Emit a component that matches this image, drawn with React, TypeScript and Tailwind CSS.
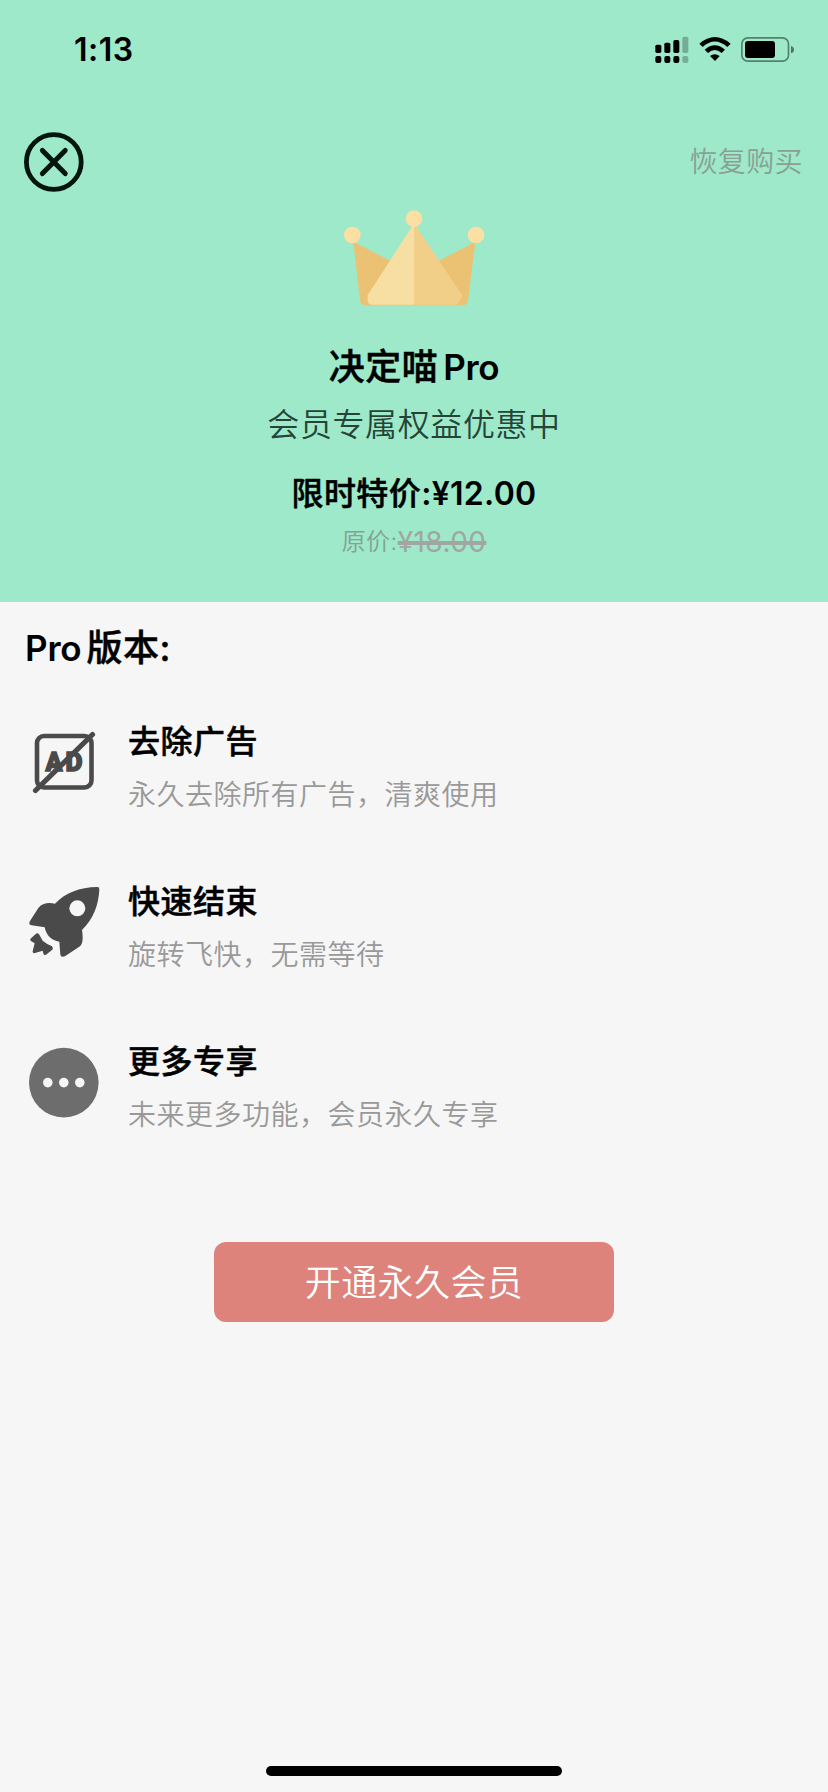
import React from 'react';

interface Feature {
    title: string;
    desc: string;
    icon: React.ReactNode;
}

const SignalIcon = () => (
    <svg className="w-[34px] h-[28px]" viewBox="80 108 102 84">
        <rect x="81" y="134" width="18" height="25" rx="5" />
        <rect x="108" y="128" width="18" height="31" rx="5" />
        <rect x="135" y="120" width="18" height="39" rx="5" />
        <rect x="162" y="110" width="18" height="49" rx="5" opacity="0.25" />
        <rect x="81" y="168" width="18" height="21" rx="6" />
        <rect x="108" y="168" width="18" height="21" rx="6" />
        <rect x="135" y="168" width="18" height="21" rx="6" />
        <rect x="162" y="168" width="18" height="21" rx="6" opacity="0.25" />
    </svg>
);

const WifiIcon = () => (
    <svg className="w-[32px] h-[28px]" viewBox="215 108 96 84">
        <path d="M216 131 Q262 91 310 131 L300 141 Q262 108 226 141 Z" />
        <path d="M232 149 Q262 123 293 149 L283 159 Q262 141 242 159 Z" />
        <path d="M248 168 Q262 157 277 168 L263 183 Z" />
    </svg>
);

const BatteryIcon = () => (
    <svg className="w-[53px] h-[28px]" viewBox="339 108 159 84">
        <rect x="341.5" y="113.5" width="140" height="70" rx="18" fill="none" stroke="#000" strokeWidth="5" opacity="0.45" />
        <rect x="351" y="123" width="90" height="51" rx="9" />
        <path d="M489 138 Q498 141 498 149 Q498 157 489 160 Z" opacity="0.5" />
    </svg>
);

const CloseIcon = () => (
    <svg className="w-[60px] h-[60px]" viewBox="0 0 60 60" fill="none" stroke="#04150d" strokeLinecap="round">
        <circle cx="29.8" cy="30" r="27.4" strokeWidth="4.8" />
        <path d="M18.4 18.4 L41.2 41.6 M41.2 18.4 L18.4 41.6" strokeWidth="5" />
    </svg>
);

const CrownIcon = () => (
    <svg className="w-[140px] h-[98px]" viewBox="72 54 420 294">
        <path d="M100 155 L206 210 L282 250 L360 211 L466 155 L444 330 Q442 346 428 346 H136 Q122 346 120 330 Z" fill="#ebc173" />
        <path d="M282 100 V344 H156 Q143 344 143 330 V316 Z" fill="#f7dfa3" />
        <path d="M282 100 L427 316 Q422 332 411 344 H282 Z" fill="#f2cf89" />
        <circle cx="97" cy="135" r="25" fill="#fbdfa3" />
        <circle cx="282" cy="86" r="25" fill="#fbdfa3" />
        <circle cx="468" cy="135" r="25" fill="#fbdfa3" />
    </svg>
);

const NoAdIcon = () => (
    <svg className="w-[72px] h-[72px]" viewBox="0 0 72 72" fill="#4a4a4a" stroke="#4a4a4a">
        <rect x="9" y="10" width="54.5" height="51.5" rx="7" fill="none" strokeWidth="4.6" />
        <g strokeWidth="1.4" className="font-['Roboto'] text-[26px] font-black">
            <text x="17.5" y="44.5" textLength="17" lengthAdjust="spacingAndGlyphs">A</text>
            <text x="37.5" y="44.5" textLength="17" lengthAdjust="spacingAndGlyphs">D</text>
        </g>
        <path d="M7.5 64.5 L64.5 8.5" strokeWidth="5.2" strokeLinecap="round" />
    </svg>
);

const RocketIcon = () => (
    <svg className="w-[72px] h-[72px]" viewBox="84 78 216 216" fill="#4a4a4a">
        <path d="M292 81 Q298 81 298 88 C296 135 280 178 246 210 C249 230 250 250 240 259 L196 288 Q183 294 181 284 L178 245 C155 242 138 225 134 202 L95 196 Q84 194 90 183 L115 144 C125 130 145 126 165 131 C195 99 238 82 292 81 Z" />
        <path d="M108 221 Q113 217 118 224 L128 242 Q140 252 156 259 Q161 264 157 269 L138 284 Q131 288 130 280 L128 272 L105 279 Q97 281 98 274 L104 250 L94 244 Q88 240 93 235 Z" />
        <circle cx="232" cy="145" r="24" fill="#f6f6f6" />
    </svg>
);

const MoreIcon = () => (
    <svg className="w-[72px] h-[72px]" viewBox="0 0 72 72">
        <circle cx="35.8" cy="36.6" r="34.8" fill="#6d6d6d" />
        <circle cx="19.8" cy="36.6" r="4.8" fill="#f6f6f6" />
        <circle cx="35.8" cy="36.6" r="4.8" fill="#f6f6f6" />
        <circle cx="51.8" cy="36.6" r="4.8" fill="#f6f6f6" />
    </svg>
);

const features: Feature[] = [
    { title: '去除广告', desc: '永久去除所有广告，清爽使用', icon: <NoAdIcon /> },
    { title: '快速结束', desc: '旋转飞快，无需等待', icon: <RocketIcon /> },
    { title: '更多专享', desc: '未来更多功能，会员永久专享', icon: <MoreIcon /> },
];

const StatusBar = () => (
    <div className="flex h-[100px] items-center justify-between pl-[74px] pr-[34px]">
        <span className="text-[32px] leading-10 font-semibold tracking-[0.5px]">1:13</span>
        <div className="flex items-center gap-[10px]">
            <SignalIcon />
            <WifiIcon />
            <BatteryIcon />
        </div>
    </div>
);

const App: React.FC = () => {
    return (
        <div className="flex h-[1792px] w-[828px] flex-col bg-[#f6f6f6] font-['Inter','Noto_Sans_CJK_SC',sans-serif] whitespace-nowrap text-black">
            <header className="h-[602px] bg-[#9de9c9]">
                <StatusBar />
                <div className="mt-8 flex items-center justify-between pl-6 pr-[25px]">
                    <button><CloseIcon /></button>
                    <button className="text-[28px] leading-9 font-[350] tracking-[0.4px] text-[#89a094]">恢复购买</button>
                </div>
                <div className="mt-4 flex flex-col items-center">
                    <CrownIcon />
                    <h1 className="mt-[37px] flex text-[36px] leading-[48px] font-medium tracking-[0.5px]">
                        <span className="[-webkit-text-stroke:0.5px_black]">决定喵</span>
                        <span className="ml-[5px] text-[35px] font-semibold tracking-[-0.3px]">Pro</span>
                    </h1>
                    <p className="mt-[14px] text-[32px] leading-10 font-[350] tracking-[0.6px] text-[#254437]">会员专属权益优惠中</p>
                    <p className="mt-[29px] flex text-[32px] leading-10 font-medium tracking-[0.4px]">
                        <span className="[-webkit-text-stroke:0.5px_black]">限时特价</span>
                        <span className="font-semibold tracking-[0.3px]">:¥12.00</span>
                    </p>
                    <p className="mt-3 flex text-[24px] leading-8 font-[350] tracking-[0.4px] text-[#84a292]">
                        原价:
                        <span className="text-[28px] font-normal text-[#a0a6a2] line-through decoration-[4px]">¥18.00</span>
                    </p>
                </div>
            </header>
            <main className="flex flex-1 flex-col pt-[22px]">
                <h2 className="flex pl-[25px] text-[36px] leading-[48px] font-medium tracking-[0.5px]">
                    <span className="text-[35px] font-semibold tracking-[-0.2px]">Pro</span>
                    <span className="ml-[5px] [-webkit-text-stroke:0.5px_black]">版本:</span>
                </h2>
                <ul className="mt-[10px]">
                    {features.map((item) => (
                        <li key={item.title} className="flex h-40 items-start pl-7">
                            <div className="mt-11">{item.icon}</div>
                            <div className="ml-7 pt-10">
                                <h3 className="text-[32px] leading-10 font-medium tracking-[0.5px] [-webkit-text-stroke:0.5px_black]">{item.title}</h3>
                                <p className="mt-[15px] text-[28px] leading-9 font-[350] tracking-[0.5px] text-[#999999]">{item.desc}</p>
                            </div>
                        </li>
                    ))}
                </ul>
                <button className="mt-20 h-20 w-[400px] self-center rounded-[12px] bg-[#dd837b] pt-0.5 text-[36px] font-[350] tracking-[0.4px] text-white">
                    开通永久会员
                </button>
                <div className="mt-auto mb-4 h-[10px] w-[296px] self-center rounded-full bg-black" />
            </main>
        </div>
    );
};

export default App;
